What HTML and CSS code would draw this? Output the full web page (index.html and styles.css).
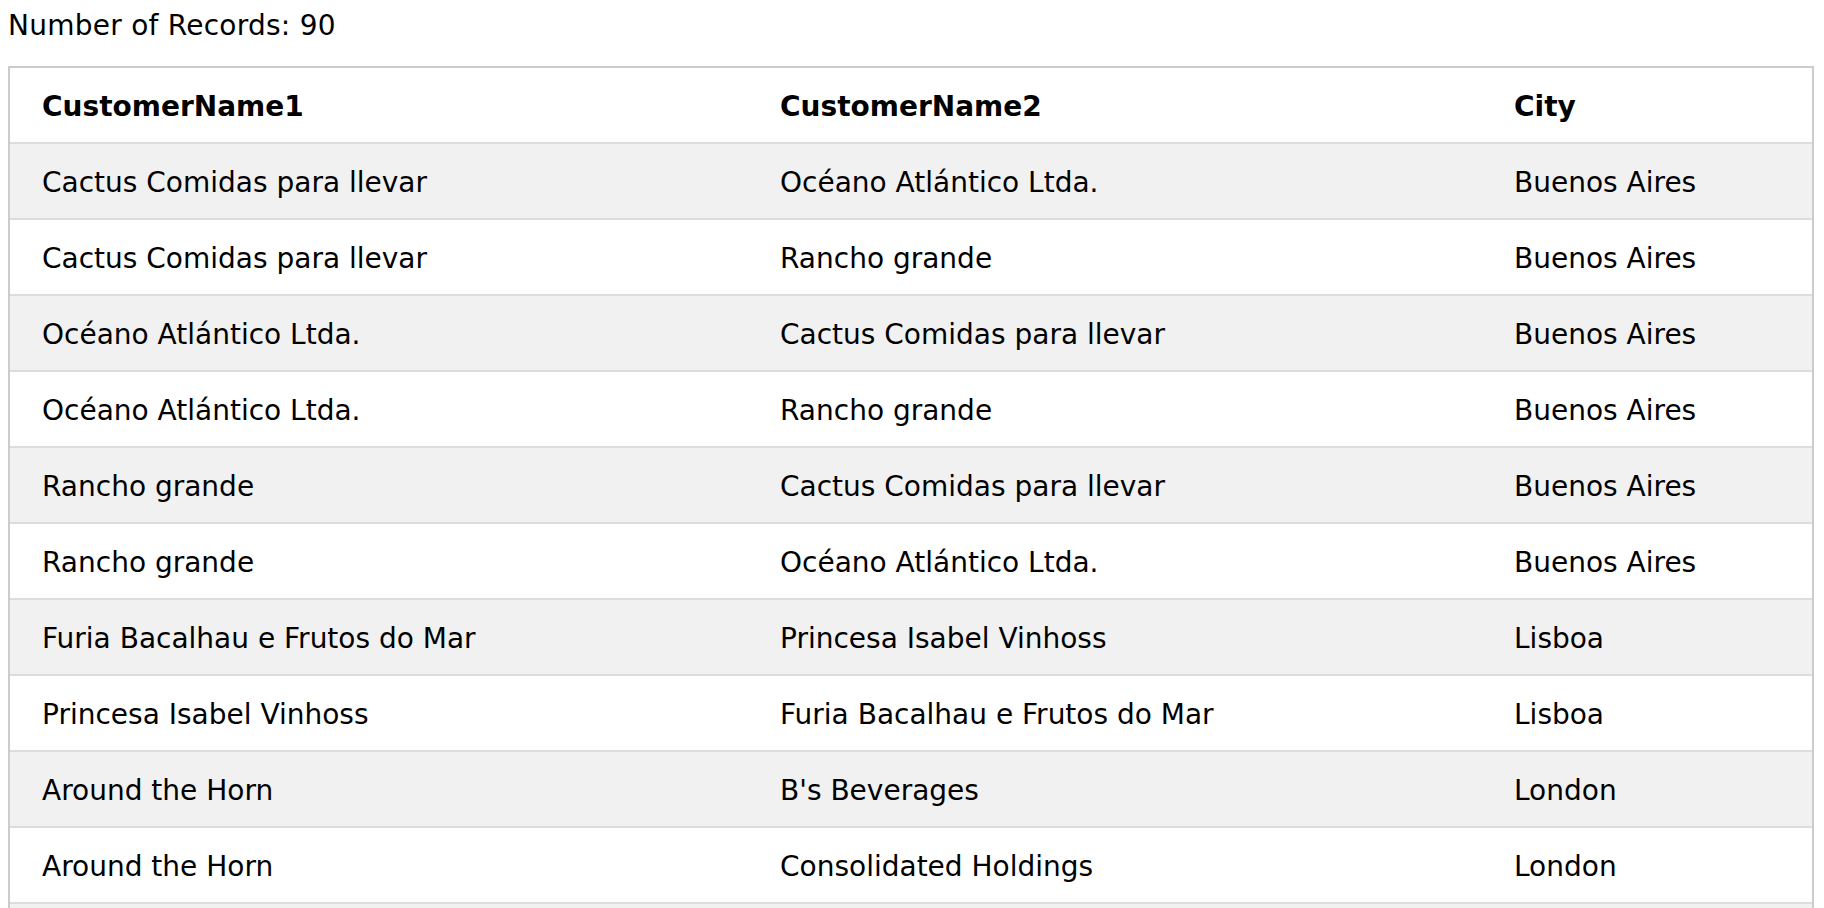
FILE: index.html
```html
<!DOCTYPE html>
<html>
<head>
<meta charset="utf-8">
<link rel="stylesheet" href="styles.css">
</head>
<body>
<div class="count">Number of Records: 90</div>
<table class="records">
  <colgroup>
    <col class="c1">
    <col class="c2">
    <col class="c3">
  </colgroup>
  <thead>
    <tr><th>CustomerName1</th><th>CustomerName2</th><th>City</th></tr>
  </thead>
  <tbody>
    <tr><td>Cactus Comidas para llevar</td><td>Océano Atlántico Ltda.</td><td>Buenos Aires</td></tr>
    <tr><td>Cactus Comidas para llevar</td><td>Rancho grande</td><td>Buenos Aires</td></tr>
    <tr><td>Océano Atlántico Ltda.</td><td>Cactus Comidas para llevar</td><td>Buenos Aires</td></tr>
    <tr><td>Océano Atlántico Ltda.</td><td>Rancho grande</td><td>Buenos Aires</td></tr>
    <tr><td>Rancho grande</td><td>Cactus Comidas para llevar</td><td>Buenos Aires</td></tr>
    <tr><td>Rancho grande</td><td>Océano Atlántico Ltda.</td><td>Buenos Aires</td></tr>
    <tr><td>Furia Bacalhau e Frutos do Mar</td><td>Princesa Isabel Vinhoss</td><td>Lisboa</td></tr>
    <tr><td>Princesa Isabel Vinhoss</td><td>Furia Bacalhau e Frutos do Mar</td><td>Lisboa</td></tr>
    <tr><td>Around the Horn</td><td>B's Beverages</td><td>London</td></tr>
    <tr><td>Around the Horn</td><td>Consolidated Holdings</td><td>London</td></tr>
    <tr><td>Around the Horn</td><td>Eastern Connection</td><td>London</td></tr>
  </tbody>
</table>
</body>
</html>
```

FILE: styles.css
```css
html, body {
  background: #ffffff;
}
body {
  margin: 0 8px;
  font-family: "DejaVu Sans", Verdana, sans-serif;
  font-size: 28px;
  color: #000000;
}
.count {
  padding-top: 5px;
  line-height: 42px;
  margin-bottom: 19px;
  letter-spacing: 0.25px;
}
.records {
  width: 1806px;
  table-layout: fixed;
  border-collapse: separate;
  border-spacing: 0;
  border: 2px solid #cccccc;
}
.c1 { width: 754px; }
.c2 { width: 734px; }
.c3 { width: 314px; }
.records th,
.records td {
  text-align: left;
  vertical-align: top;
  line-height: 42px;
  padding: 18px 15px 14px 16px;
  border-bottom: 2px solid #dddddd;
  white-space: nowrap;
}
.records th {
  font-weight: bold;
}
.records th:first-child,
.records td:first-child {
  padding-left: 32px;
}
.records tbody tr:nth-child(odd) {
  background: #f1f1f1;
}
.records tbody tr:nth-child(even) {
  background: #ffffff;
}
```
